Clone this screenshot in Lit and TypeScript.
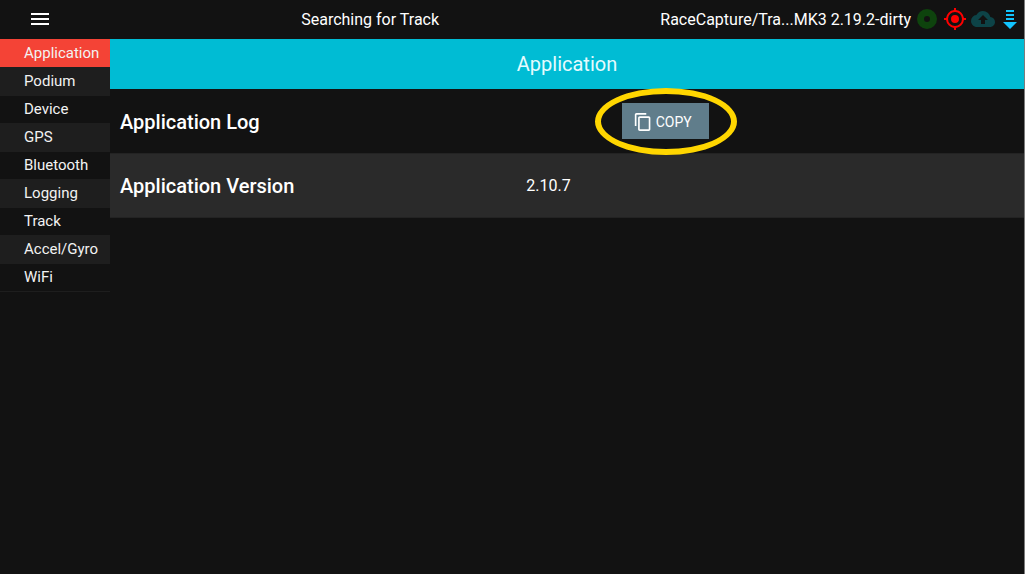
import { LitElement, html, css } from "lit";
import { customElement, state } from "lit/decorators.js";
import { classMap } from "lit/directives/class-map.js";

const SECTIONS = [
  "Application",
  "Podium",
  "Device",
  "GPS",
  "Bluetooth",
  "Logging",
  "Track",
  "Accel/Gyro",
  "WiFi",
];

@customElement("app-root")
export class AppRoot extends LitElement {
  @state() private section = "Application";

  static styles = css`
    :host {
      display: flex;
      flex-direction: column;
      min-height: 100vh;
      box-sizing: border-box;
      border-right: 1px solid #7c7c7c;
      background: #121212;
      color: #fff;
      font-family: Roboto, "Liberation Sans", sans-serif;
      font-size: 16px;
    }
    * {
      box-sizing: border-box;
    }
    svg {
      display: block;
      flex: none;
    }
    .bar {
      display: flex;
      align-items: center;
      height: 39px;
      padding-right: 2px;
    }
    .menu {
      display: flex;
      align-items: center;
      justify-content: center;
      width: 80px;
      height: 39px;
      padding: 0 0 1px;
      border: 0;
      background: none;
      color: inherit;
    }
    .status {
      flex: 1;
      text-align: center;
    }
    .icons {
      display: flex;
      align-items: center;
      gap: 4px;
      height: 39px;
      margin-left: 4px;
      margin-right: -1px;
      padding-bottom: 1px;
    }
    .body {
      display: flex;
      flex: 1;
    }
    .nav {
      flex: none;
      width: 110px;
    }
    .link {
      display: block;
      height: 28px;
      padding-left: 24px;
      box-shadow: 0 1px #1e1e1e;
      color: #f2f2f2;
      font-size: 15px;
      line-height: 28px;
      text-decoration: none;
    }
    .link:nth-child(even) {
      background: #1e1e1e;
    }
    .link.active {
      background: #f44336;
    }
    .main {
      flex: 1;
    }
    .heading {
      margin: 0;
      background: #00bcd4;
      color: #e6fbfe;
      font-size: 20px;
      font-weight: 400;
      line-height: 50px;
      text-align: center;
    }
    .row {
      display: grid;
      grid-template-columns: 4fr 5fr;
      align-items: center;
      height: 64px;
    }
    .row.alt {
      height: 65px;
      border: 1px solid #232323;
      border-width: 1px 0;
      background: #2a2a2a;
    }
    .label {
      margin: 0;
      padding: 1px 0 0 10px;
      font-size: 20px;
      font-weight: 500;
      line-height: 24px;
    }
    .value {
      padding-left: 10px;
    }
    .action {
      display: flex;
      justify-content: center;
      max-width: 298px;
    }
    .target {
      position: relative;
    }
    .copy {
      display: flex;
      align-items: center;
      gap: 4px;
      height: 36px;
      padding: 2px 17px 0 12px;
      border: 0;
      background: #607d8b;
      color: #fff;
      font: 400 14px Roboto, "Liberation Sans", sans-serif;
    }
    .ring {
      position: absolute;
      inset: -15px -28px -16px -27px;
      border: 6px solid #ffd600;
      border-radius: 50%;
      pointer-events: none;
    }
  `;

  render() {
    return html`
      <header class="bar">
        <button class="menu" aria-label="Menu">
          <svg width="18" height="12" viewBox="0 0 18 12" fill="currentColor">
            <path d="M0 0h18v2H0zM0 5h18v2H0zM0 10h18v2H0z" />
          </svg>
        </button>
        <span class="status">Searching for Track</span>
        <span>RaceCapture/Tra...MK3 2.19.2-dirty</span>
        <div class="icons">
          <svg width="24" height="24" viewBox="0 0 24 24" fill="#0e430d">
            <path
              fill-rule="evenodd"
              d="M12 2a10 10 0 1 0 0 20a10 10 0 0 0 0-20zm0 7a3 3 0 1 1 0 6a3 3 0 0 1 0-6z"
            />
          </svg>
          <svg width="24" height="24" viewBox="0 0 24 24" fill="#f00">
            <path
              d="M12 8a4 4 0 1 0 0 8 4 4 0 0 0 0-8zm8.940 3A8.994 8.994 0 0 0 13 3.060V1h-2v2.060A8.994 8.994 0 0 0 3.060 11H1v2h2.060A8.994 8.994 0 0 0 11 20.940V23h2v-2.060A8.994 8.994 0 0 0 20.940 13H23v-2h-2.060zM12 19a7 7 0 1 1 0-14 7 7 0 0 1 0 14z"
            />
          </svg>
          <svg width="24" height="24" viewBox="0 0 24 24" fill="#0d4347">
            <path
              d="M19.350 10.040A7.490 7.490 0 0 0 12 4C9.110 4 6.600 5.640 5.350 8.040A5.994 5.994 0 0 0 0 14c0 3.310 2.690 6 6 6h13c2.760 0 5-2.240 5-5 0-2.640-2.050-4.780-4.650-4.960zM14 13v4h-4v-4H7l5-5 5 5h-3z"
            />
          </svg>
          <svg width="24" height="24" viewBox="0 0 24 24" fill="#12c4ff">
            <path d="M7 3h8v2H7zM7 7h8v2H7zM7 11h8v2H7zM4 15h14l-7 7z" />
          </svg>
        </div>
      </header>
      <div class="body">
        <nav class="nav">
          ${SECTIONS.map(
            (name) => html`<a
              class=${classMap({ link: true, active: name === this.section })}
              href="#"
              @click=${(e: Event) => {
                e.preventDefault();
                this.section = name;
              }}
              >${name}</a
            >`,
          )}
        </nav>
        <main class="main">
          <h1 class="heading">${this.section}</h1>
          <section class="row">
            <h2 class="label">Application Log</h2>
            <div class="action">
              <div class="target">
                <button class="copy">
                  <svg width="18" height="18" viewBox="1 1 22 22" fill="currentColor">
                    <path
                      d="M16 1H4c-1.100 0-2 .9-2 2v14h2V3h12V1zm3 4H8c-1.100 0-2 .9-2 2v14c0 1.100.9 2 2 2h11c1.100 0 2-.9 2-2V7c0-1.100-.9-2-2-2zm0 16H8V7h11v14z"
                    />
                  </svg>
                  <span>COPY</span>
                </button>
                <div class="ring"></div>
              </div>
            </div>
          </section>
          <section class="row alt">
            <h2 class="label">Application Version</h2>
            <div class="value">2.10.7</div>
          </section>
        </main>
      </div>
    `;
  }
}
